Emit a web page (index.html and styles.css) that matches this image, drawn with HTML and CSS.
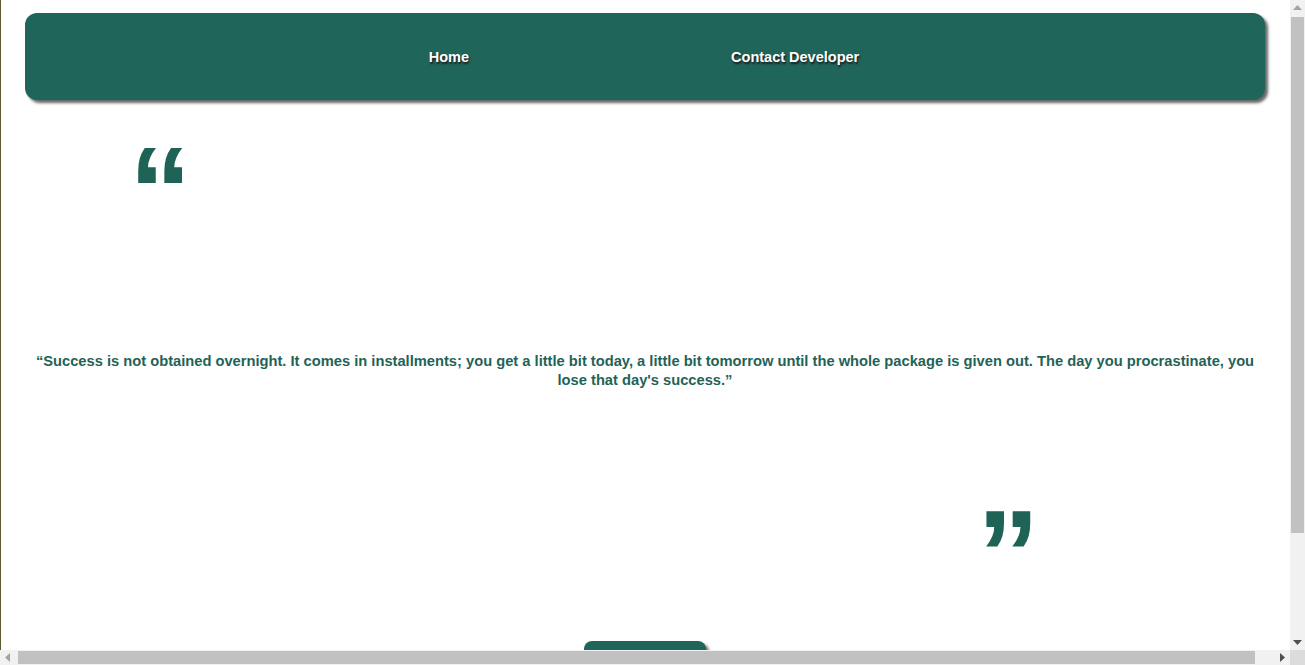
FILE: index.html
```html
<!DOCTYPE html>
<html lang="en">
<head>
<meta charset="utf-8">
<title>Quote</title>
<link rel="stylesheet" href="styles.css">
</head>
<body>
<nav class="nav">
  <ul class="nav-list">
    <li><a class="nav-link" href="#">Home</a></li>
    <li><a class="nav-link" href="#">Contact Developer</a></li>
  </ul>
</nav>
<main class="quote">
  <div class="mark mark-open">“</div>
  <p class="quote-text">“Success is not obtained overnight. It comes in installments; you get a little bit today, a little bit tomorrow until the whole package is given out. The day you procrastinate, you lose that day's success.”</p>
  <div class="mark mark-close">”</div>
</main>
<div class="actions">
  <button class="btn" type="button" aria-label="New quote"></button>
</div>

<div class="vscroll">
  <div class="sb-btn"><svg width="9" height="5" viewBox="0 0 9 5"><path d="M0 5 L4.5 0 L9 5 Z" fill="#a3a3a3"/></svg></div>
  <div class="vtrack"><div class="vthumb"></div></div>
  <div class="sb-btn"><svg width="9" height="5" viewBox="0 0 9 5"><path d="M0 0 L9 0 L4.5 5 Z" fill="#505050"/></svg></div>
</div>
<div class="hscroll">
  <div class="sb-btn"><svg width="5" height="9" viewBox="0 0 5 9"><path d="M5 0 L5 9 L0 4.5 Z" fill="#a3a3a3"/></svg></div>
  <div class="htrack"><div class="hthumb"></div></div>
  <div class="sb-btn"><svg width="5" height="9" viewBox="0 0 5 9"><path d="M0 0 L5 4.5 L0 9 Z" fill="#505050"/></svg></div>
</div>
<div class="sb-corner"></div>
</body>
</html>
```
FILE: styles.css
```css
html {
  border-left: 1px solid #5e5c30;
}
body {
  margin: 0 15px 0 0;
  font-family: "Liberation Sans", Arial, sans-serif;
  background: #ffffff;
}
.nav {
  margin: 13px 25px 0 24px;
  height: 87px;
  background: #20655a;
  border-radius: 12px;
  box-shadow: 3px 3px 3px #666;
  display: flex;
  align-items: center;
}
.nav-list {
  list-style: none;
  margin: 0;
  padding: 0 2px 0 0;
  width: 100%;
  display: flex;
  justify-content: center;
  gap: 262px;
}
.nav-link {
  color: #ffffff;
  text-decoration: none;
  font-weight: bold;
  font-size: 14.5px;
  text-shadow: 1px 2px 2px #1a1a1a;
}
.quote {
  margin: 0 25px 0 24px;
  color: #1f6357;
}
.mark {
  font-weight: bold;
  font-size: 125px;
  line-height: 1;
  height: 125px;
}
.mark-open {
  margin-top: 28px;
  padding-left: 104px;
}
.quote-text {
  margin: 99px 0 0;
  text-align: center;
  font-weight: bold;
  font-size: 14.7px;
  line-height: 19px;
}
.mark-close {
  margin-top: 101px;
  padding-left: 952px;
}
.actions {
  width: calc(100% + 17px);
  padding-right: 18px;
  box-sizing: border-box;
  display: flex;
  justify-content: center;
  margin-top: 25px;
  padding-bottom: 94px;
}
.btn {
  width: 122px;
  height: 40px;
  border: none;
  border-radius: 8px;
  background: #20655a;
  box-shadow: 3px 3px 3px #666;
}

/* classic scrollbars drawn over the page edge */
.vscroll {
  position: fixed;
  top: 0;
  right: 0;
  width: 15px;
  height: 650px;
  background: #f1f1f1;
  display: flex;
  flex-direction: column;
}
.hscroll {
  position: fixed;
  left: 0;
  bottom: 0;
  width: 1290px;
  height: 15px;
  background: #f1f1f1;
  display: flex;
}
.sb-corner {
  position: fixed;
  right: 0;
  bottom: 0;
  width: 15px;
  height: 15px;
  background: #dcdcdc;
}
.sb-btn {
  width: 15px;
  height: 15px;
  flex: none;
  display: flex;
  align-items: center;
  justify-content: center;
}
.vtrack {
  flex: 1;
  padding: 2px 1px 0 1px;
}
.vthumb {
  height: 516px;
  background: #c1c1c1;
}
.htrack {
  flex: 1;
  padding: 1px 0 1px 3px;
}
.hthumb {
  width: 1237px;
  height: 13px;
  background: #c1c1c1;
}
```
